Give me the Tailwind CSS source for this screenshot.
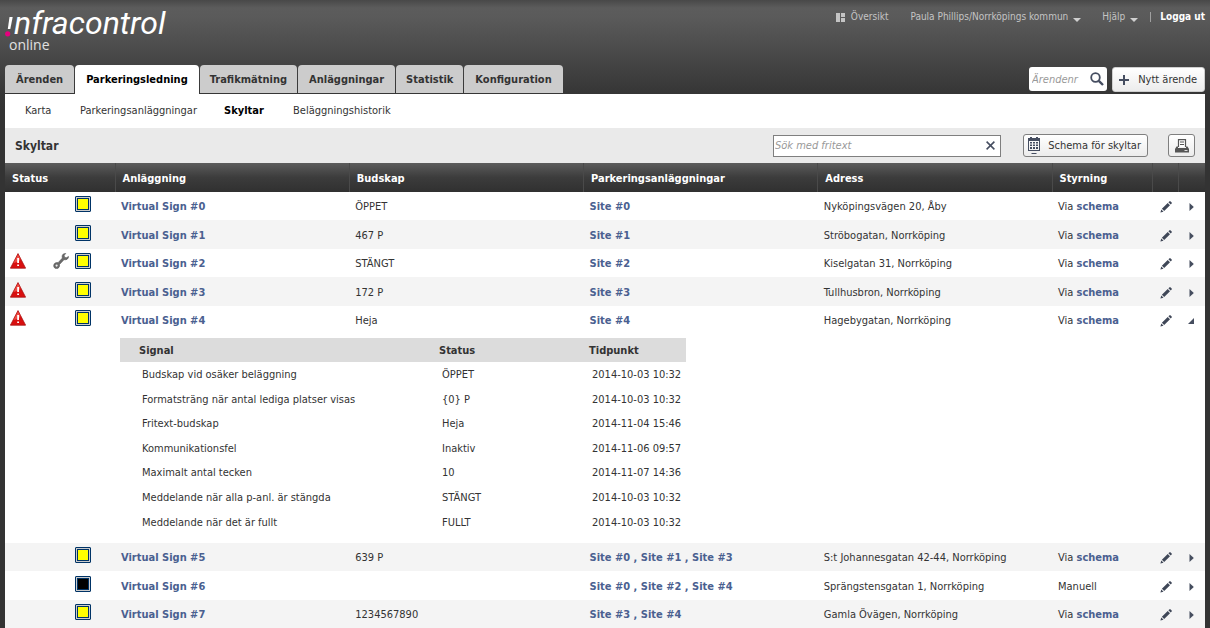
<!DOCTYPE html>
<html lang="sv">
<head>
<meta charset="utf-8">
<meta name="viewport" content="width=device-width, initial-scale=1">
<title>Skyltar – Infracontrol Online</title>
<script src="https://cdn.jsdelivr.net/npm/@tailwindcss/browser@4"></script>
</head>
<body class="min-h-screen overflow-x-hidden bg-[#333333] bg-[linear-gradient(#484848_0px,#5c5c5c_8px,#5a5a5a_18px,#363636_93px,#333333_110px)] bg-no-repeat px-[5px] font-['DejaVu_Sans_Condensed','DejaVu_Sans',sans-serif] text-[11px] leading-4 text-[#333333]">

<svg class="hidden" aria-hidden="true">
  <symbol id="warn" viewBox="0 0 16 16">
    <path d="M8 .6 15.6 15.2H.4Z" fill="#d90f0f" stroke="#a81414" stroke-width=".8" stroke-linejoin="round"/>
    <path d="M8 1.500 3.500 10 9 8.500 10.500 6Z" fill="#ee4a42"/>
    <path d="M7.200 5H9v5H7.200zM7.200 11.400H9v1.700H7.200z" fill="#fff"/>
  </symbol>
  <symbol id="wrench" viewBox="0 0 16 16">
    <path d="M12.800.400c-2.300-.2-3.700 1.200-3.700 3 0 .7.1 1.200.3 1.600L5 9.700c-2-.6-4 .5-4.300 2.500-.3 2 1.200 3.500 2.900 3.400 2-.1 3.400-1.900 2.900-4.100L11 6.700c2.400.6 4.600-.9 4.600-3.300L13.300 4.700 11.500 4.200 11.200 2.300Z" fill="#6a6a6a" stroke="#4c4c4c" stroke-width=".5"/>
    <circle cx="3.600" cy="12.600" r="1.100" fill="#eee"/>
  </symbol>
  <symbol id="pencil" viewBox="0 0 12 12">
    <path d="M.4 11.600 1.300 8.500 3.500 10.700Z M1.900 7.800 7.700 2 10 4.300 4.200 10.100Z M8.400 1.300 9.500.300q.5-.3.900 0L11.700 1.600q.3.500 0 .9L10.700 3.600Z" fill="#3f4757"/>
  </symbol>
  <symbol id="right" viewBox="0 0 5 8"><path d="M.5 0 4.800 4 .5 8Z" fill="#454d5e"/></symbol>
  <symbol id="open" viewBox="0 0 6 6"><path d="M6 0V6H0Z" fill="#454d5e"/></symbol>
</svg>

<header class="flex flex-col">
  <div class="flex h-[65px] items-start justify-between">
    <a href="#" class="block pt-[9px] text-white" aria-label="Infracontrol online">
      <span class="flex items-start">
        <svg class="mt-[8px] h-5 w-[9px]" viewBox="0 0 9 20" aria-hidden="true"><path d="M4.500 0H7.700L5.300 12H2.800Z" fill="#fff"/><circle cx="2.700" cy="16.800" r="2.600" fill="#e6007e"/></svg>
        <span class="font-['Roboto',sans-serif] text-[32px] leading-[28px] italic">nfracontrol</span>
      </span>
      <span class="-mt-px block pl-1 font-['Open_Sans',sans-serif] text-[14px] leading-[18px] text-[#e0e0e0]">online</span>
    </a>
    <nav class="flex items-center pt-[9px] text-[10px] text-[#c4c4c4]" aria-label="Konto">
      <a href="#" class="flex items-center gap-[6px]">
        <svg class="h-[9px] w-[9px]" viewBox="0 0 9 9" aria-hidden="true"><path d="M0 0h4v9H0zM5 0h4v4H5zM5 5h4v4H5z" fill="#c4c4c4"/></svg>
        Översikt</a>
      <button type="button" class="ml-[22px] flex items-center gap-[5px]">Paula Phillips/Norrköpings kommun
        <svg class="mt-[6px] h-1 w-2" viewBox="0 0 8 4" aria-hidden="true"><path d="M0 0h8L4 4Z" fill="#d0d0d0"/></svg></button>
      <button type="button" class="ml-[21px] flex items-center gap-[5px]">Hjälp
        <svg class="mt-[6px] h-1 w-2" viewBox="0 0 8 4" aria-hidden="true"><path d="M0 0h8L4 4Z" fill="#d0d0d0"/></svg></button>
      <span class="ml-3 h-[10px] w-px bg-[#a0a0a0]"></span>
      <a href="#" class="ml-[9px] font-bold text-white">Logga ut</a>
    </nav>
  </div>
  <div class="flex items-start justify-between">
    <nav class="flex gap-px font-bold" aria-label="Huvudmeny">
      <a href="#" class="h-7 rounded-t bg-[#cccccc] px-[11px] leading-[29px]">Ärenden</a>
      <a href="#" class="h-[29px] rounded-t bg-white px-[11px] leading-[29px] text-black" aria-current="page">Parkeringsledning</a>
      <a href="#" class="h-7 rounded-t bg-[#cccccc] px-[10px] leading-[29px]">Trafikmätning</a>
      <a href="#" class="h-7 rounded-t bg-[#cccccc] px-[11px] leading-[29px]">Anläggningar</a>
      <a href="#" class="h-7 rounded-t bg-[#cccccc] px-[10px] leading-[29px]">Statistik</a>
      <a href="#" class="h-7 rounded-t bg-[#cccccc] px-[11px] leading-[29px]">Konfiguration</a>
    </nav>
    <div class="flex gap-[5px] pt-[2px]">
      <form class="flex h-6 w-[78px] items-center rounded-[3px] bg-white pr-[3px]" role="search">
        <input type="text" aria-label="Ärendenr" placeholder="Ärendenr" class="w-full min-w-0 pt-px pl-[3px] italic outline-none placeholder:text-[#999999]">
        <button type="submit" aria-label="Sök ärende"><svg class="h-[14px] w-[14px]" viewBox="0 0 14 14" fill="none" stroke="#454d60" aria-hidden="true"><circle cx="5.500" cy="5.500" r="4.300" stroke-width="1.800"/><path d="m8.800 8.800 4.200 4.200" stroke-width="2.400"/></svg></button>
      </form>
      <button type="button" class="flex h-[25px] w-[93px] items-center justify-between rounded-[3px] border border-[#cfcfcf] bg-linear-to-b from-white to-[#ececec] pr-[7px] pl-[6px]">
        <svg class="h-[10px] w-[10px]" viewBox="0 0 10 10" aria-hidden="true"><path d="M4 0h2v4h4v2H6v4H4V6H0V4h4Z" fill="#454d60"/></svg>
        Nytt ärende</button>
    </div>
  </div>
</header>

<main class="bg-white">
  <nav class="flex h-[34px] items-center pl-5" aria-label="Undermeny">
    <a href="#" class="w-[55px]">Karta</a>
    <a href="#" class="w-36">Parkeringsanläggningar</a>
    <a href="#" class="w-[69px] font-bold text-black" aria-current="page">Skyltar</a>
    <a href="#">Beläggningshistorik</a>
  </nav>

  <div class="flex h-[35px] items-center bg-[#eaeaea] pr-[10px] pl-[10px]">
    <h1 class="grow text-[12px] font-bold">Skyltar</h1>
    <form class="flex h-[22px] w-[228px] items-center border border-[#7f7f7f] bg-white pr-[5px]" role="search">
      <input type="text" aria-label="Sök med fritext" placeholder="Sök med fritext" class="w-full min-w-0 pt-px pl-px italic outline-none placeholder:text-[#999999]">
      <button type="reset" aria-label="Rensa"><svg class="h-[9px] w-[9px]" viewBox="0 0 9 9" stroke="#454d60" stroke-width="1.500" aria-hidden="true"><path d="m.6.6 7.800 7.800M8.400.6.6 8.400"/></svg></button>
    </form>
    <button type="button" class="ml-[22px] flex h-[23px] w-[125px] items-center justify-between rounded-[3px] border border-[#7f7f7f] bg-linear-to-b from-white to-[#ececec] pr-[6px] pl-1">
      <svg class="h-[17px] w-3" viewBox="0 0 12 17" aria-hidden="true"><path d="M2 0h2v1h4V0h2v1h2v13H0V1h2ZM1 4v9h10V4Z" fill="#454d60"/><path d="M2 5h2v1.500H2zM5 5h2v1.500H5zM8 5h2v1.500H8zM2 7.500h2V9H2zM5 7.500h2V9H5zM8 7.500h2V9H8zM2 10h2v2H2zM5 10h2v2H5zM8 10h2v2H8z" fill="#454d60"/><path d="M3.500 16.500h5" stroke="#454d60"/></svg>
      Schema för skyltar</button>
    <button type="button" aria-label="Skriv ut" class="ml-5 flex h-[23px] w-[27px] items-center justify-center rounded-[3px] border border-[#7f7f7f] bg-linear-to-b from-white to-[#ececec]">
      <svg class="mt-px h-[14px] w-[14px]" viewBox="0 0 14 14" aria-hidden="true"><path d="M3.500 8V.700h7V8" fill="#fff" stroke="#555" stroke-width="1.200"/><path d="M5 3h4M5 5.500h4" stroke="#555"/><path d="M1.500 7.500H3V9h8V7.500h1.500L14 10v3.500H0V10Z" fill="#555"/><path d="M9.500 11.500h3" stroke="#ddd"/></svg></button>
  </div>

  <table class="w-full table-fixed border-collapse text-left [&_td]:pt-[2px] [&_th]:pt-[2px]">
    <colgroup><col class="w-[110px]"><col><col><col><col><col class="w-[100px]"><col class="w-[26px]"><col class="w-[27px]"></colgroup>
    <thead class="bg-linear-to-b from-[#5c5c5c] via-[#3c3c3c] to-[#303030] text-white">
      <tr class="h-[29px]">
        <th class="pl-[7px]">Status</th>
        <th class="border-l border-[#4a4a4a] pl-[7px]">Anläggning</th>
        <th class="border-l border-[#4a4a4a] pl-[7px]">Budskap</th>
        <th class="border-l border-[#4a4a4a] pl-[7px]">Parkeringsanläggningar</th>
        <th class="border-l border-[#4a4a4a] pl-[7px]">Adress</th>
        <th class="border-l border-[#4a4a4a] pl-[7px]">Styrning</th>
        <th class="border-l border-[#4a4a4a]"></th>
        <th class="border-l border-[#4a4a4a]"></th>
      </tr>
    </thead>
    <tbody>
      <tr class="h-7">
        <td class="pr-6 pl-[5px]"><div class="-mt-[6px] flex items-center justify-end"><span class="h-4 w-4 rounded-[1px] border border-[#003366] bg-[#cccccc] p-px"><span class="block h-3 border border-[#003366] bg-[#ffff00]"></span></span></div></td>
        <td class="pl-[6px]"><a href="#" class="font-bold text-[#4a6090]">Virtual Sign #0</a></td>
        <td class="pl-[6px]">ÖPPET</td>
        <td class="pl-[6px]"><a href="#" class="font-bold text-[#4a6090]">Site #0</a></td>
        <td class="pl-[6px]">Nyköpingsvägen 20, Åby</td>
        <td class="pl-[6px]">Via <a href="#" class="font-bold text-[#4a6090]">schema</a></td>
        <td class="pl-2"><button type="button" aria-label="Redigera" class="block"><svg class="h-3 w-3"><use href="#pencil"/></svg></button></td>
        <td class="pl-[11px]"><button type="button" aria-label="Visa detaljer" class="block"><svg class="h-2 w-[5px]"><use href="#right"/></svg></button></td>
      </tr>
      <tr class="h-[29px] bg-[#f4f4f4]">
        <td class="pr-6 pl-[5px]"><div class="-mt-[6px] flex items-center justify-end"><span class="h-4 w-4 rounded-[1px] border border-[#003366] bg-[#cccccc] p-px"><span class="block h-3 border border-[#003366] bg-[#ffff00]"></span></span></div></td>
        <td class="pl-[6px]"><a href="#" class="font-bold text-[#4a6090]">Virtual Sign #1</a></td>
        <td class="pl-[6px]">467 P</td>
        <td class="pl-[6px]"><a href="#" class="font-bold text-[#4a6090]">Site #1</a></td>
        <td class="pl-[6px]">Ströbogatan, Norrköping</td>
        <td class="pl-[6px]">Via <a href="#" class="font-bold text-[#4a6090]">schema</a></td>
        <td class="pl-2"><button type="button" aria-label="Redigera" class="block"><svg class="h-3 w-3"><use href="#pencil"/></svg></button></td>
        <td class="pl-[11px]"><button type="button" aria-label="Visa detaljer" class="block"><svg class="h-2 w-[5px]"><use href="#right"/></svg></button></td>
      </tr>
      <tr class="h-7">
        <td class="pr-6 pl-[5px]"><div class="-mt-[6px] flex items-center justify-end"><svg class="mr-auto h-4 w-4" role="img" aria-label="Varning"><use href="#warn"/></svg><svg class="mr-[6px] h-4 w-4" role="img" aria-label="Underhåll"><use href="#wrench"/></svg><span class="h-4 w-4 rounded-[1px] border border-[#003366] bg-[#cccccc] p-px"><span class="block h-3 border border-[#003366] bg-[#ffff00]"></span></span></div></td>
        <td class="pl-[6px]"><a href="#" class="font-bold text-[#4a6090]">Virtual Sign #2</a></td>
        <td class="pl-[6px]">STÄNGT</td>
        <td class="pl-[6px]"><a href="#" class="font-bold text-[#4a6090]">Site #2</a></td>
        <td class="pl-[6px]">Kiselgatan 31, Norrköping</td>
        <td class="pl-[6px]">Via <a href="#" class="font-bold text-[#4a6090]">schema</a></td>
        <td class="pl-2"><button type="button" aria-label="Redigera" class="block"><svg class="h-3 w-3"><use href="#pencil"/></svg></button></td>
        <td class="pl-[11px]"><button type="button" aria-label="Visa detaljer" class="block"><svg class="h-2 w-[5px]"><use href="#right"/></svg></button></td>
      </tr>
      <tr class="h-[29px] bg-[#f4f4f4]">
        <td class="pr-6 pl-[5px]"><div class="-mt-[6px] flex items-center justify-end"><svg class="mr-auto h-4 w-4" role="img" aria-label="Varning"><use href="#warn"/></svg><span class="h-4 w-4 rounded-[1px] border border-[#003366] bg-[#cccccc] p-px"><span class="block h-3 border border-[#003366] bg-[#ffff00]"></span></span></div></td>
        <td class="pl-[6px]"><a href="#" class="font-bold text-[#4a6090]">Virtual Sign #3</a></td>
        <td class="pl-[6px]">172 P</td>
        <td class="pl-[6px]"><a href="#" class="font-bold text-[#4a6090]">Site #3</a></td>
        <td class="pl-[6px]">Tullhusbron, Norrköping</td>
        <td class="pl-[6px]">Via <a href="#" class="font-bold text-[#4a6090]">schema</a></td>
        <td class="pl-2"><button type="button" aria-label="Redigera" class="block"><svg class="h-3 w-3"><use href="#pencil"/></svg></button></td>
        <td class="pl-[11px]"><button type="button" aria-label="Visa detaljer" class="block"><svg class="h-2 w-[5px]"><use href="#right"/></svg></button></td>
      </tr>
      <tr class="h-7">
        <td class="pr-6 pl-[5px]"><div class="-mt-[6px] flex items-center justify-end"><svg class="mr-auto h-4 w-4" role="img" aria-label="Varning"><use href="#warn"/></svg><span class="h-4 w-4 rounded-[1px] border border-[#003366] bg-[#cccccc] p-px"><span class="block h-3 border border-[#003366] bg-[#ffff00]"></span></span></div></td>
        <td class="pl-[6px]"><a href="#" class="font-bold text-[#4a6090]">Virtual Sign #4</a></td>
        <td class="pl-[6px]">Heja</td>
        <td class="pl-[6px]"><a href="#" class="font-bold text-[#4a6090]">Site #4</a></td>
        <td class="pl-[6px]">Hagebygatan, Norrköping</td>
        <td class="pl-[6px]">Via <a href="#" class="font-bold text-[#4a6090]">schema</a></td>
        <td class="pl-2"><button type="button" aria-label="Redigera" class="block"><svg class="h-3 w-3"><use href="#pencil"/></svg></button></td>
        <td class="pl-[10px]"><button type="button" aria-label="Dölj detaljer" aria-expanded="true" class="block"><svg class="h-[6px] w-[6px]"><use href="#open"/></svg></button></td>
      </tr>
      <tr>
        <td></td>
        <td colspan="7" class="pt-1! pb-[9px] pl-[5px]">
          <table class="w-[566px] table-fixed border-collapse">
            <colgroup><col class="w-[300px]"><col class="w-[150px]"><col></colgroup>
            <thead class="bg-[#dcdcdc]">
              <tr class="h-6"><th class="pl-[19px]">Signal</th><th class="pl-[19px]">Status</th><th class="pl-[19px]">Tidpunkt</th></tr>
            </thead>
            <tbody>
              <tr class="h-6"><td class="pl-[22px]">Budskap vid osäker beläggning</td><td class="pl-[22px]">ÖPPET</td><td class="pl-[22px]">2014-10-03 10:32</td></tr>
              <tr class="h-[25px]"><td class="pl-[22px]">Formatsträng när antal lediga platser visas</td><td class="pl-[22px]">{0} P</td><td class="pl-[22px]">2014-10-03 10:32</td></tr>
              <tr class="h-6"><td class="pl-[22px]">Fritext-budskap</td><td class="pl-[22px]">Heja</td><td class="pl-[22px]">2014-11-04 15:46</td></tr>
              <tr class="h-[25px]"><td class="pl-[22px]">Kommunikationsfel</td><td class="pl-[22px]">Inaktiv</td><td class="pl-[22px]">2014-11-06 09:57</td></tr>
              <tr class="h-6"><td class="pl-[22px]">Maximalt antal tecken</td><td class="pl-[22px]">10</td><td class="pl-[22px]">2014-11-07 14:36</td></tr>
              <tr class="h-[25px]"><td class="pl-[22px]">Meddelande när alla p-anl. är stängda</td><td class="pl-[22px]">STÄNGT</td><td class="pl-[22px]">2014-10-03 10:32</td></tr>
              <tr class="h-[25px]"><td class="pl-[22px]">Meddelande när det är fullt</td><td class="pl-[22px]">FULLT</td><td class="pl-[22px]">2014-10-03 10:32</td></tr>
            </tbody>
          </table>
        </td>
      </tr>
      <tr class="h-7 bg-[#f4f4f4]">
        <td class="pr-6 pl-[5px]"><div class="-mt-[6px] flex items-center justify-end"><span class="h-4 w-4 rounded-[1px] border border-[#003366] bg-[#cccccc] p-px"><span class="block h-3 border border-[#003366] bg-[#ffff00]"></span></span></div></td>
        <td class="pl-[6px]"><a href="#" class="font-bold text-[#4a6090]">Virtual Sign #5</a></td>
        <td class="pl-[6px]">639 P</td>
        <td class="pl-[6px] font-bold text-[#4a6090]"><a href="#">Site #0</a> , <a href="#">Site #1</a> , <a href="#">Site #3</a></td>
        <td class="pl-[6px]">S:t Johannesgatan 42-44, Norrköping</td>
        <td class="pl-[6px]">Via <a href="#" class="font-bold text-[#4a6090]">schema</a></td>
        <td class="pl-2"><button type="button" aria-label="Redigera" class="block"><svg class="h-3 w-3"><use href="#pencil"/></svg></button></td>
        <td class="pl-[11px]"><button type="button" aria-label="Visa detaljer" class="block"><svg class="h-2 w-[5px]"><use href="#right"/></svg></button></td>
      </tr>
      <tr class="h-[29px]">
        <td class="pr-6 pl-[5px]"><div class="-mt-[6px] flex items-center justify-end"><span class="h-4 w-4 rounded-[1px] border border-[#003366] bg-[#cccccc] p-px"><span class="block h-3 border border-[#003366] bg-black"></span></span></div></td>
        <td class="pl-[6px]"><a href="#" class="font-bold text-[#4a6090]">Virtual Sign #6</a></td>
        <td></td>
        <td class="pl-[6px] font-bold text-[#4a6090]"><a href="#">Site #0</a> , <a href="#">Site #2</a> , <a href="#">Site #4</a></td>
        <td class="pl-[6px]">Sprängstensgatan 1, Norrköping</td>
        <td class="pl-[6px]">Manuell</td>
        <td class="pl-2"><button type="button" aria-label="Redigera" class="block"><svg class="h-3 w-3"><use href="#pencil"/></svg></button></td>
        <td class="pl-[11px]"><button type="button" aria-label="Visa detaljer" class="block"><svg class="h-2 w-[5px]"><use href="#right"/></svg></button></td>
      </tr>
      <tr class="h-7 bg-[#f4f4f4]">
        <td class="pr-6 pl-[5px]"><div class="-mt-[6px] flex items-center justify-end"><span class="h-4 w-4 rounded-[1px] border border-[#003366] bg-[#cccccc] p-px"><span class="block h-3 border border-[#003366] bg-[#ffff00]"></span></span></div></td>
        <td class="pl-[6px]"><a href="#" class="font-bold text-[#4a6090]">Virtual Sign #7</a></td>
        <td class="pl-[6px]">1234567890</td>
        <td class="pl-[6px] font-bold text-[#4a6090]"><a href="#">Site #3</a> , <a href="#">Site #4</a></td>
        <td class="pl-[6px]">Gamla Övägen, Norrköping</td>
        <td class="pl-[6px]">Via <a href="#" class="font-bold text-[#4a6090]">schema</a></td>
        <td class="pl-2"><button type="button" aria-label="Redigera" class="block"><svg class="h-3 w-3"><use href="#pencil"/></svg></button></td>
        <td class="pl-[11px]"><button type="button" aria-label="Visa detaljer" class="block"><svg class="h-2 w-[5px]"><use href="#right"/></svg></button></td>
      </tr>
    </tbody>
  </table>
</main>
</body>
</html>
